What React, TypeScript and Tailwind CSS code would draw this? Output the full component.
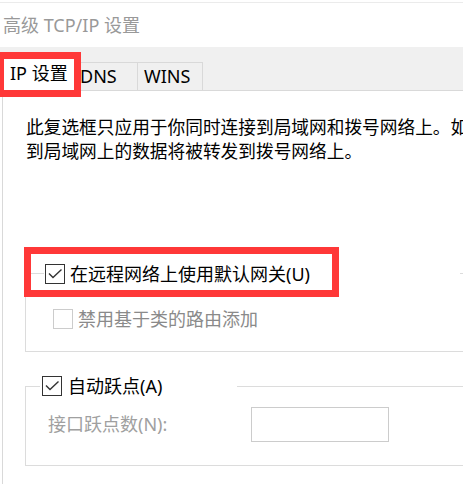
import React from "react";

const font = "font-['Noto_Sans','Noto_Sans_CJK_SC',sans-serif]";

function CheckBox({ checked, disabled }: { checked?: boolean; disabled?: boolean }) {
  return (
    <span
      className={`flex h-[20px] w-[20px] shrink-0 items-center justify-center border bg-white ${
        disabled ? "border-[#cccccc]" : "border-[#333333]"
      }`}
    >
      {checked && (
        <svg width="18" height="18" viewBox="0 0 18 18" fill="none">
          <path d="M3 8.5 L7 12.5 L15.5 4.5" stroke="#333333" strokeWidth="1.4" />
        </svg>
      )}
    </span>
  );
}

export default function App() {
  return (
    <div className={`relative h-[484px] w-[463px] overflow-hidden bg-white ${font}`}>
      {/* window title */}
      <div className="mt-[2px] flex h-[45px] items-center border-t border-[#ebebeb] pl-[3px] text-[18px] text-[#999999]">
        高级 TCP/IP 设置
      </div>

      {/* tabs */}
      <div className="flex h-[44px] items-end border-b border-[#d9d9d9] bg-[#f0f0f0] pl-[2px] text-[18px] text-black">
        <div className="relative z-10 -mb-px flex h-[37px] w-[76px] items-center border-x border-t border-[#d9d9d9] bg-white pl-[7px]">
          IP 设置
        </div>
        <div className="flex h-[28px] w-[60px] items-center border-t border-r border-[#d9d9d9] pl-[2px]">
          DNS
        </div>
        <div className="flex h-[28px] w-[65px] items-center border-t border-r border-[#d9d9d9] pl-[6px]">
          WINS
        </div>
      </div>

      {/* highlight on the selected tab */}
      <div className="absolute left-[-3px] top-[52px] z-20 h-[45px] w-[84px] border-[7px] border-[#ff3838]" />

      {/* panel */}
      <div className="ml-[2px] h-[393px] border-l border-[#d9d9d9] pt-[24px] text-[18px] text-black">
        <div className="pl-[23px] text-[17.7px] leading-[24px] whitespace-nowrap">
          <div>此复选框只应用于你同时连接到局域网和拨号网络上。如</div>
          <div>到局域网上的数据将被转发到拨号网络上。</div>
        </div>

        {/* group 1 */}
        <div className="ml-[22px] mt-[110px] h-[79px] w-[500px] border-y border-l border-[#dcdcdc]">
          <div className="relative -mt-[12px] ml-[18px] flex h-[24px] w-[416px] items-center gap-[5px] bg-white pl-[1px]">
            <CheckBox checked />
            <span className="leading-[24px]">在远程网络上使用默认网关(U)</span>
            <div className="absolute left-[-20px] top-[-15px] h-[50px] w-[315px] border-[7px] border-[#ff3838]" />
          </div>
          <div className="ml-[27px] mt-[23px] flex items-center gap-[5px] text-[#8a8a8a]">
            <CheckBox disabled />
            <span className="leading-[20px]">禁用基于类的路由添加</span>
          </div>
        </div>

        {/* group 2 */}
        <div className="ml-[22px] mt-[34px] h-[80px] w-[500px] border-y border-l border-[#dcdcdc]">
          <div className="-mt-[13px] ml-[14px] flex h-[24px] w-[197px] items-center gap-[6px] bg-white pl-[2px]">
            <CheckBox checked />
            <span className="leading-[24px]">自动跃点(A)</span>
          </div>
          <div className="ml-[22px] mt-[9px] flex h-[35px] items-center">
            <span className="w-[203px] text-[#a0a0a0]">接口跃点数(N):</span>
            <div className="h-[35px] w-[138px] border border-[#cccccc] bg-white" />
          </div>
        </div>
      </div>
    </div>
  );
}
